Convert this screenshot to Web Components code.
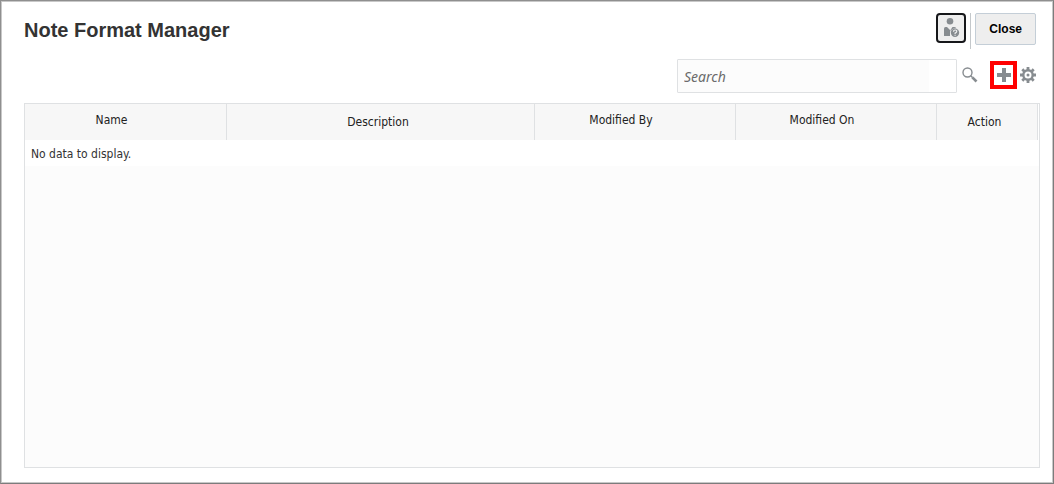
<!DOCTYPE html>
<html lang="en">
<head>
<meta charset="utf-8">
<title>Note Format Manager</title>
<style>
  body {
    margin: 0;
    font-family: Tahoma, "DejaVu Sans Condensed", "Noto Sans", sans-serif;
    font-size: 12px;
    color: #333;
    background: #fff;
  }
</style>
</head>
<body>
<note-dialog heading="Note Format Manager">
  <icon-button slot="actions" label="User help" kind="framed">
    <svg width="18" height="21" viewBox="0 0 18 21" fill="#878c90">
      <circle cx="8" cy="3.300" r="3.300"/>
      <path d="M2 18V10.500Q2 9 3.500 9H5L8 12V18Z"/>
      <path d="M8.500 12L10.500 9H12Q14 9 14 10.300Q9 10.500 8.500 14Z"/>
      <circle cx="13" cy="14.700" r="4.200"/>
      <path d="M11.500 13.700Q11.500 12 13.200 12T14.700 13.500Q14.700 14.400 13.100 15.100V16M13.100 16.700V17.700" fill="none" stroke="#eee" stroke-width="1.200"/>
    </svg>
  </icon-button>
  <tool-divider slot="actions"></tool-divider>
  <text-button slot="actions">Close</text-button>

  <search-box slot="tools" placeholder="Search"></search-box>
  <icon-button slot="tools" label="Add" kind="marked">
    <svg width="14" height="14" viewBox="0 0 14 14" fill="#878c90">
      <path d="M5 0H9V5H14V9H9V14H5V9H0V5H5Z"/>
    </svg>
  </icon-button>
  <icon-button slot="tools" label="Settings">
    <svg width="16" height="16" viewBox="0 0 16 16">
      <circle cx="8" cy="8" r="4.700" fill="none" stroke="#878c90" stroke-width="2.400"/>
      <circle cx="8" cy="8" r="1.500" fill="#878c90"/>
      <path d="M8 0V3M8 13V16M0 8H3M13 8H16M2.300 2.300L4.400 4.400M11.600 11.600L13.700 13.700M2.300 13.700L4.400 11.600M11.600 4.400L13.700 2.300" stroke="#878c90" stroke-width="2.800"/>
    </svg>
  </icon-button>

  <data-grid empty="No data to display."></data-grid>
</note-dialog>

<script>
let dialogTemplate = document.createElement('template');
dialogTemplate.innerHTML = `
    <style>
    :host {
      display: flex;
      flex-direction: column;
      box-sizing: border-box;
      min-height: 100vh;
      padding: 10px 13px 15px 22px;
      border: 1px solid #8f8f8f;
      border-right-color: #7c7c7c;
      border-bottom-color: #7c7c7c;
      box-shadow: inset 0 0 0 1px #c8c8c8;
    }
    header {
      display: flex;
      align-items: center;
      justify-content: space-between;
      height: 40px;
      padding-left: 1px;
      padding-right: 4px;
    }
    h1 {
      margin: 0;
      padding-bottom: 2px;
      font: bold 20px/24px "Liberation Sans", Arial, sans-serif;
    }
    .actions {
      display: flex;
      align-items: flex-start;
      gap: 4px;
    }
    .tools {
      display: flex;
      align-items: center;
      justify-content: flex-end;
      gap: 3px;
      height: 32px;
      margin: 8px 4px 12px 0;
    }
    main {
      display: flex;
      flex: 1;
      padding-left: 1px;
    }
    </style>
    <header>
      <h1></h1>
      <div class="actions"><slot name="actions"></slot></div>
    </header>
    <div class="tools"><slot name="tools"></slot></div>
    <main><slot></slot></main>
`;

class NoteDialog extends HTMLElement {
    connectedCallback() {
        this.attachShadow({mode: "open"});
        this.shadowRoot.appendChild(dialogTemplate.content.cloneNode(true));
        this.shadowRoot.querySelector("h1").textContent = this.getAttribute("heading");
    }
}

let iconButtonTemplate = document.createElement('template');
iconButtonTemplate.innerHTML = `
    <style>
    :host {
      display: block;
    }
    button {
      display: flex;
      align-items: center;
      justify-content: center;
      box-sizing: border-box;
      padding: 0;
      border: 0;
      background: none;
    }
    :host([kind="framed"]) button {
      width: 30px;
      height: 30px;
      border: 2px solid #16171a;
      border-radius: 4px;
      background: #eee;
    }
    :host([kind="marked"]) button {
      width: 27px;
      height: 28px;
      border: 4px solid #f00;
    }
    </style>
    <button type="button"><slot></slot></button>
`;

class IconButton extends HTMLElement {
    connectedCallback() {
        this.attachShadow({mode: "open"});
        this.shadowRoot.appendChild(iconButtonTemplate.content.cloneNode(true));
        this.shadowRoot.querySelector("button").setAttribute("aria-label", this.getAttribute("label"));
    }
}

let dividerTemplate = document.createElement('template');
dividerTemplate.innerHTML = `
    <style>
    :host {
      display: block;
      width: 1px;
      height: 36px;
      background: #c4c8cb;
    }
    </style>
`;

class ToolDivider extends HTMLElement {
    connectedCallback() {
        this.attachShadow({mode: "open"});
        this.shadowRoot.appendChild(dividerTemplate.content.cloneNode(true));
    }
}

let textButtonTemplate = document.createElement('template');
textButtonTemplate.innerHTML = `
    <style>
    :host {
      display: block;
    }
    button {
      height: 32px;
      padding: 0 13px;
      border: 1px solid #c4ced7;
      border-radius: 2px;
      background: #eee;
      color: #000;
      font: bold 12px/16px "Liberation Sans", Arial, sans-serif;
    }
    </style>
    <button type="button"><slot></slot></button>
`;

class TextButton extends HTMLElement {
    connectedCallback() {
        this.attachShadow({mode: "open"});
        this.shadowRoot.appendChild(textButtonTemplate.content.cloneNode(true));
    }
}

let searchTemplate = document.createElement('template');
searchTemplate.innerHTML = `
    <style>
    :host {
      display: flex;
      align-items: flex-start;
      gap: 4px;
      height: 32px;
      margin-right: 8px;
    }
    input {
      box-sizing: border-box;
      width: 280px;
      height: 34px;
      padding: 0 27px 0 6px;
      border: 1px solid #dfe1e3;
      border-radius: 1px;
      background: linear-gradient(to left, #fff 27px, #fcfcfc 27px);
      font: 14px/20px "Noto Sans", "Open Sans", sans-serif;
    }
    input::placeholder {
      color: #6b6b6b;
      font-style: italic;
      opacity: 1;
    }
    button {
      display: flex;
      align-self: center;
      padding: 0;
      border: 0;
      background: none;
    }
    </style>
    <input type="search" aria-label="Search">
    <button type="button" aria-label="Run search">
      <svg width="18" height="18" viewBox="0 0 18 18" fill="none" stroke="#878c90">
        <circle cx="6.500" cy="6.500" r="4.500" stroke-width="1.400"/>
        <path d="M9.800 9.800L11.500 11.500" stroke-width="1.400"/>
        <path d="M11.300 11.300L15.500 15.500" stroke-width="2.600"/>
      </svg>
    </button>
`;

class SearchBox extends HTMLElement {
    connectedCallback() {
        this.attachShadow({mode: "open"});
        this.shadowRoot.appendChild(searchTemplate.content.cloneNode(true));
        this.shadowRoot.querySelector("input").placeholder = this.getAttribute("placeholder");
    }
}

let gridTemplate = document.createElement('template');
gridTemplate.innerHTML = `
    <style>
    :host {
      display: block;
      flex: 1;
      border: 1px solid #dfe1e3;
      background: #fcfcfc;
    }
    table {
      width: 100%;
      table-layout: fixed;
      border-collapse: separate;
      border-spacing: 0;
    }
    th {
      box-sizing: border-box;
      height: 36px;
      padding: 0 5px 0 0;
      border-right: 1px solid #dfe1e3;
      background: #f7f7f7;
      color: #222;
      font-weight: normal;
      line-height: 16px;
      text-align: center;
    }
    th.sortable {
      padding: 0 28px 4px 0;
    }
    td {
      box-sizing: border-box;
      height: 26px;
      padding: 2px 6px 0;
      background: #fff;
      line-height: 16px;
    }
    .wide {
      width: 202px;
    }
    .date {
      width: 201px;
    }
    .action {
      width: 101px;
    }
    .gutter {
      width: 1px;
      padding: 0;
      border: 0;
    }
    </style>
    <table>
      <thead>
        <tr>
          <th scope="col" class="wide sortable">Name</th>
          <th scope="col">Description</th>
          <th scope="col" class="date sortable">Modified By</th>
          <th scope="col" class="date sortable">Modified On</th>
          <th scope="col" class="action">Action</th>
          <td class="gutter"></td>
        </tr>
      </thead>
      <tbody>
        <tr><td class="empty" colspan="6"></td></tr>
      </tbody>
    </table>
`;

class DataGrid extends HTMLElement {
    connectedCallback() {
        this.attachShadow({mode: "open"});
        this.shadowRoot.appendChild(gridTemplate.content.cloneNode(true));
        this.shadowRoot.querySelector(".empty").textContent = this.getAttribute("empty");
    }
}

window.customElements.define('note-dialog', NoteDialog);
window.customElements.define('icon-button', IconButton);
window.customElements.define('tool-divider', ToolDivider);
window.customElements.define('text-button', TextButton);
window.customElements.define('search-box', SearchBox);
window.customElements.define('data-grid', DataGrid);
</script>
</body>
</html>
